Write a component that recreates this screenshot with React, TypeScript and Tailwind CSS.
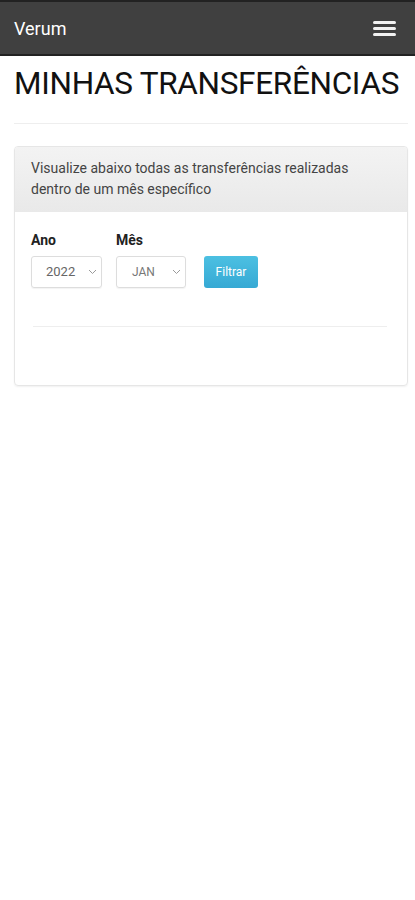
import React from "react";

const Chevron = () => (
  <svg width="9" height="6" viewBox="0 0 9 6" className="ml-auto">
    <path d="M1 1l3.5 3.5L8 1" fill="none" stroke="#9a9a9a" strokeWidth="1" />
  </svg>
);

export default function App() {
  return (
    <div className="min-h-[900px] w-[415px] bg-white" style={{ fontFamily: "Roboto, 'Liberation Sans', sans-serif" }}>
      <header className="flex h-[56px] items-center justify-between border-t-2 border-b-2 border-[#222] bg-[#404040] pl-[14px] pr-[19px]">
        <span className="text-[18px] text-white">Verum</span>
        <div className="flex w-[23px] flex-col gap-[3px]">
          <span className="block h-[3px] rounded-sm bg-[#f2f2f2]" />
          <span className="block h-[3px] rounded-sm bg-[#f2f2f2]" />
          <span className="block h-[3px] rounded-sm bg-[#f2f2f2]" />
        </div>
      </header>
      <div className="px-[14px] pr-[7px]">
        <h1 className="mt-[7px] text-[31.5px] leading-[42px] tracking-[-0.3px] text-[#111]">MINHAS TRANSFERÊNCIAS</h1>
        <div className="mt-[18px] h-px bg-[#eeeeee]" />
        <div className="mt-[22px] overflow-hidden rounded-[4px] border border-[#e6e6e6] shadow-[0_1px_2px_rgba(0,0,0,0.06)]">
          <div className="bg-gradient-to-b from-[#f3f3f3] to-[#e9e9e9] px-[16px] pt-[11px] pb-[12px] text-[14px] leading-[21px] text-[#444]">
            Visualize abaixo todas as transferências realizadas dentro de um mês específico
          </div>
          <div className="px-[16px] pt-[18px] pb-[58px]">
            <div className="flex items-end gap-[14px]">
              <div className="flex flex-col">
                <span className="mb-[5px] text-[14px] font-bold text-[#222]">Ano</span>
                <div className="flex h-[32px] w-[71px] items-center rounded-[3px] border border-[#ddd] pl-[14px] pr-[4px] text-[13px] text-[#666] shadow-[0_1px_1px_rgba(0,0,0,0.05)]">
                  2022
                  <Chevron />
                </div>
              </div>
              <div className="flex flex-col">
                <span className="mb-[5px] text-[14px] font-bold text-[#222]">Mês</span>
                <div className="flex h-[32px] w-[70px] items-center rounded-[3px] border border-[#ddd] pl-[15px] pr-[4px] text-[12px] text-[#777] shadow-[0_1px_1px_rgba(0,0,0,0.05)]">
                  JAN
                  <Chevron />
                </div>
              </div>
              <button className="ml-[4px] flex h-[32px] w-[54px] items-center justify-center rounded-[3px] bg-gradient-to-b from-[#4cc0e2] to-[#36a9d4] text-[12px] text-white">
                Filtrar
              </button>
            </div>
            <div className="mx-[2px] mt-[38px] mr-[4px] h-px bg-[#eeeeee]" />
          </div>
        </div>
      </div>
    </div>
  );
}
